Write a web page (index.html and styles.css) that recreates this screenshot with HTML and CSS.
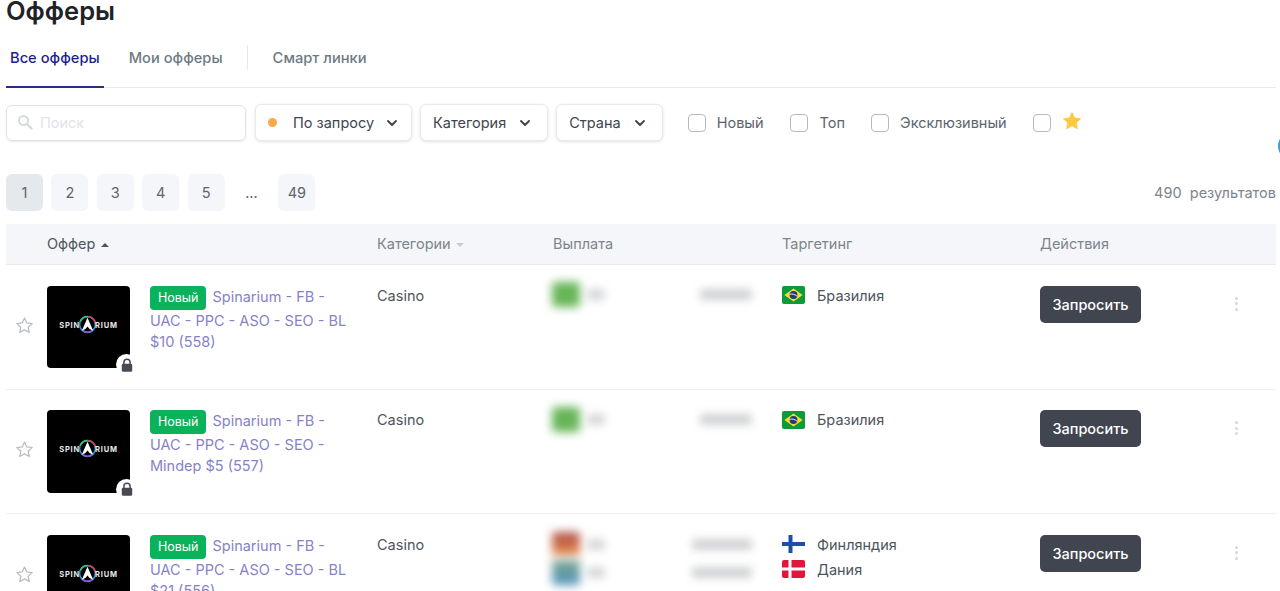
FILE: index.html
```html
<!DOCTYPE html>
<html lang="ru">
<head>
<meta charset="utf-8">
<title>Офферы</title>
<link rel="stylesheet" href="styles.css">
</head>
<body>
<svg class="defs" width="0" height="0" aria-hidden="true">
  <defs>
    <symbol id="chev" viewBox="0 0 12 12"><path d="M2 4l4 4 4-4" fill="none" stroke="currentColor" stroke-width="1.9" stroke-linecap="round" stroke-linejoin="round"/></symbol>
    <symbol id="star" viewBox="0 0 24 24"><path d="M12 2.6l2.9 6.2 6.8.8-5 4.6 1.3 6.7-6-3.4-6 3.4 1.3-6.7-5-4.6 6.8-.8z" fill="none" stroke="currentColor" stroke-width="1.6" stroke-linejoin="round"/></symbol>
    <symbol id="lock" viewBox="0 0 14 14"><path d="M3.9 6V4.3a3.1 3.1 0 0 1 6.2 0V6" fill="none" stroke="currentColor" stroke-width="1.5"/><rect x="1.8" y="5.8" width="10.4" height="8" rx="1.4" fill="currentColor"/></symbol>
    <symbol id="logoa" viewBox="0 0 24 24">
      <circle cx="12" cy="12" r="10" fill="none" stroke="#2f8fd8" stroke-width="2"/>
      <path d="M3 8A10 10 0 0 1 12 2" fill="none" stroke="#3fbf6b" stroke-width="2"/>
      <path d="M13 2A10 10 0 0 1 22 11" fill="none" stroke="#d8434b" stroke-width="2"/>
      <path d="M5 19A10 10 0 0 0 19 19" fill="none" stroke="#a04fd0" stroke-width="2"/>
      <path d="M12 3.500L4.800 20l4.600-2.400L12 14.500l2.600 3.100 4.600 2.400z" fill="#fff"/>
    </symbol>
    <symbol id="br" viewBox="0 0 23 18"><rect width="23" height="18" rx="2" fill="#0c9b3a"/><path d="M11.5 2.4L20.6 9l-9.1 6.6L2.4 9z" fill="#fbdc2b"/><circle cx="11.5" cy="9" r="3.9" fill="#1c3a86"/><path d="M7.8 8.2c2.6-.5 5.3.2 7.3 2" fill="none" stroke="#fff" stroke-width=".9"/></symbol>
    <symbol id="fi" viewBox="0 0 23 18"><rect width="23" height="18" rx="2" fill="#fff"/><path d="M0 7h6.500V0h4v7H23v4H10.500v7h-4v-7H0z" fill="#1d4fa8"/></symbol>
    <symbol id="dk" viewBox="0 0 23 18"><rect width="23" height="18" rx="2" fill="#e0163d"/><path d="M0 7.500h6.500V0h3v7.500H23v3H9.500V18h-3v-7.500H0z" fill="#fff"/></symbol>
  </defs>
</svg>
<main class="page">
  <h1 class="title">Офферы</h1>

  <nav class="tabs">
    <a class="tab tab-active">Все офферы</a>
    <a class="tab tab-second">Мои офферы</a>
    <span class="tab-sep"></span>
    <a class="tab tab-third">Смарт линки</a>
  </nav>

  <div class="filters">
    <label class="search">
      <svg class="search-icon" viewBox="0 0 16 16" width="16" height="16"><circle cx="6.500" cy="6.500" r="4.500" fill="none" stroke="currentColor" stroke-width="2"/><path d="M10 10l4.500 4.500" stroke="currentColor" stroke-width="2.400" stroke-linecap="round"/></svg>
      <span class="search-ph">Поиск</span>
    </label>
    <button class="select select-status"><span class="dot"></span><span>По запросу</span><svg class="chev"><use href="#chev"/></svg></button>
    <button class="select"><span>Категория</span><svg class="chev"><use href="#chev"/></svg></button>
    <button class="select"><span>Страна</span><svg class="chev"><use href="#chev"/></svg></button>
    <div class="checks">
      <label class="check check-new"><span class="box"></span>Новый</label>
      <label class="check check-top"><span class="box"></span>Топ</label>
      <label class="check check-excl"><span class="box"></span>Эксклюзивный</label>
      <label class="check"><span class="box"></span><svg class="fav" viewBox="0 0 24 24"><path d="M12 1.800l3.100 6.600 7.200.9-5.300 4.900 1.400 7.100-6.400-3.600-6.400 3.600 1.400-7.100-5.300-4.900 7.200-.9z" fill="#fbc83f" stroke="#fbc83f" stroke-linejoin="round"/></svg></label>
    </div>
  </div>
  <span class="edge-dot"></span>

  <div class="pager-row">
    <div class="pager">
      <a class="pg pg-on">1</a><a class="pg">2</a><a class="pg">3</a><a class="pg">4</a><a class="pg">5</a>
      <span class="pg pg-gap">...</span><a class="pg">49</a>
    </div>
    <div class="count">490&nbsp; результатов</div>
  </div>

  <div class="table">
    <div class="row row-head">
      <div class="c-star"></div>
      <div class="c-offer">Оффер <i class="caret caret-up"></i></div>
      <div class="c-cat">Категории <i class="caret caret-down"></i></div>
      <div class="c-pay">Выплата</div>
      <div class="c-geo">Таргетинг</div>
      <div class="c-act">Действия</div>
    </div>

    <div class="row">
      <div class="c-star"><svg class="star"><use href="#star"/></svg></div>
      <div class="c-offer offer">
        <div class="thumb"><span class="logo">SPIN<svg class="logo-a"><use href="#logoa"/></svg>RIUM</span><span class="lock"><svg><use href="#lock"/></svg></span></div>
        <div class="offer-name"><span class="badge">Новый</span>Spinarium - FB - UAC - PPC - ASO - SEO - BL $10 (558)</div>
      </div>
      <div class="c-cat cell-text">Casino</div>
      <div class="c-pay"><div class="pay"><i class="blob blob-green"></i><i class="smudge s-a"></i><i class="smudge s-b"></i></div></div>
      <div class="c-geo"><div class="geo"><svg class="flag"><use href="#br"/></svg>Бразилия</div></div>
      <div class="c-act"><button class="cta">Запросить</button></div>
      <div class="c-more"><i></i><i></i><i></i></div>
    </div>

    <div class="row">
      <div class="c-star"><svg class="star"><use href="#star"/></svg></div>
      <div class="c-offer offer">
        <div class="thumb"><span class="logo">SPIN<svg class="logo-a"><use href="#logoa"/></svg>RIUM</span><span class="lock"><svg><use href="#lock"/></svg></span></div>
        <div class="offer-name"><span class="badge">Новый</span>Spinarium - FB - UAC - PPC - ASO - SEO - Mindep $5 (557)</div>
      </div>
      <div class="c-cat cell-text">Casino</div>
      <div class="c-pay"><div class="pay"><i class="blob blob-green"></i><i class="smudge s-a"></i><i class="smudge s-b"></i></div></div>
      <div class="c-geo"><div class="geo"><svg class="flag"><use href="#br"/></svg>Бразилия</div></div>
      <div class="c-act"><button class="cta">Запросить</button></div>
      <div class="c-more"><i></i><i></i><i></i></div>
    </div>

    <div class="row">
      <div class="c-star"><svg class="star"><use href="#star"/></svg></div>
      <div class="c-offer offer">
        <div class="thumb"><span class="logo">SPIN<svg class="logo-a"><use href="#logoa"/></svg>RIUM</span></div>
        <div class="offer-name"><span class="badge">Новый</span>Spinarium - FB - UAC - PPC - ASO - SEO - BL $21 (556)</div>
      </div>
      <div class="c-cat cell-text">Casino</div>
      <div class="c-pay">
        <div class="pay pay-multi"><i class="blob blob-de"></i><i class="smudge s-a"></i><i class="smudge s-c"></i></div>
        <div class="pay pay-multi"><i class="blob blob-fi"></i><i class="smudge s-a"></i><i class="smudge s-c"></i></div>
      </div>
      <div class="c-geo">
        <div class="geo geo-multi"><svg class="flag"><use href="#fi"/></svg>Финляндия</div>
        <div class="geo geo-multi"><svg class="flag"><use href="#dk"/></svg>Дания</div>
      </div>
      <div class="c-act"><button class="cta">Запросить</button></div>
      <div class="c-more"><i></i><i></i><i></i></div>
    </div>
  </div>
</main>
</body>
</html>
```

FILE: styles.css
```css
* { box-sizing: border-box; }
html, body { margin: 0; height: 591px; overflow: hidden; background: #fff; }
body { font-family: Inter, "Noto Sans", sans-serif; font-size: 14.500px; color: #3f4550; }
.defs { position: absolute; }
.page { position: relative; padding: 0 4px 0 6px; }

.title { margin: 0; font-size: 25.500px; font-weight: 600; line-height: 22px; height: 22px; color: #1f2227; }

.tabs { display: flex; height: 66px; border-bottom: 1px solid #e9ebef; font-size: 14.700px; font-weight: 500; color: #6e7a83; }
.tab { display: flex; align-items: center; padding: 6px 4px 0; }
.tab-active { color: #1c1f8e; border-bottom: 2px solid #2a2f86; margin-bottom: -1px; padding-top: 8px; }
.tab-second { margin-left: 21px; }
.tab-sep { align-self: center; width: 1px; height: 25px; margin: 6px 21px 0 20px; background: #e6e8ec; }

.filters { display: flex; align-items: center; height: 37px; margin-top: 16px; }
.search { display: flex; align-items: center; gap: 7px; width: 240px; height: 36px; margin-top: 1px; padding: 0 10px 2px; border: 1px solid #dfe2e7; border-radius: 6px; box-shadow: 0 1px 2px rgba(30, 40, 60, .1); }
.search-icon { color: #d6dae0; flex: none; }
.search-ph { color: #e0e3e8; }
.select { display: flex; align-items: center; height: 37px; margin-left: 8px; padding: 0 16px 0 12px; background: #fff; border: 1px solid #e8eaee; border-radius: 6px; box-shadow: 0 1px 3px rgba(30, 40, 60, .14); font: inherit; color: #3f4550; }
.select-status { margin-left: 9px; padding: 0 13px 0 12px; }
.dot { width: 9px; height: 9px; margin-right: 16px; border-radius: 50%; background: #f8a94b; }
.chev { width: 12px; height: 12px; margin-left: 13px; color: #3f4550; }
.select-status .chev { margin-left: 12px; }
.checks { display: flex; align-items: center; margin-left: 25px; color: #5b646d; }
.check { display: flex; align-items: center; gap: 11px; }
.check-new { margin-right: 26px; }
.check-top { gap: 12px; margin-right: 26px; }
.check-excl { margin-right: 26px; }
.box { width: 18px; height: 18px; border: 1.500px solid #b5bbc3; border-radius: 4px; }
.fav { width: 20px; height: 20px; margin-top: -3px; }
.edge-dot { position: absolute; left: 1278px; top: 137px; width: 10px; height: 18px; border-radius: 50%; background: #3d9bdc; }

.pager-row { display: flex; align-items: center; justify-content: space-between; height: 37px; margin-top: 33px; }
.pager { display: flex; gap: 8.400px; }
.pg { display: flex; align-items: center; justify-content: center; width: 37px; height: 37px; border-radius: 6px; background: #f4f6f9; color: #5c646d; }
.pg-on { background: #e5e9ee; }
.pg-gap { background: none; }
.count { color: #7c858c; }

.table { margin-top: 13px; }
.row { display: grid; grid-template-columns: 41px 330px 176px 229px 258px 196px 40px; height: 124.500px; border-bottom: 1px solid #eef0f3; }
.row-head { height: 41px; padding-bottom: 2px; align-items: center; background: #f4f6fa; color: #7c858c; border-bottom: 1px solid #e9ebef; }
.row-head > div { padding-top: 0; }
.c-star { display: flex; align-items: center; padding-left: 9px; }
.row-head .c-offer { color: #4d555d; }
.caret { display: inline-block; width: 0; height: 0; margin-left: 1px; vertical-align: 2px; border: 4px solid transparent; }
.caret-up { border-top: 0; border-bottom: 4px solid #4d555d; }
.caret-down { border-bottom: 0; border-top: 4px solid #c9cdd3; }
.star { width: 19px; height: 19px; color: #b9bdc3; margin-top: -3px; }

.offer { display: flex; gap: 20px; padding-top: 20.900px; }
.thumb { position: relative; flex: none; display: flex; align-items: center; justify-content: center; width: 83px; height: 82.500px; padding-bottom: 4px; border-radius: 4px; background: #000; }
.logo { display: flex; align-items: center; font-size: 7.500px; font-weight: 700; letter-spacing: .8px; color: #e9e9e9; }
.logo-a { width: 19px; height: 19px; margin: -2px -2px 0; }
.lock { position: absolute; right: -7px; bottom: -7px; display: flex; align-items: center; justify-content: center; width: 21px; height: 21px; border-radius: 50% 50% 0 50%; background: #fff; }
.lock svg { width: 14px; height: 14px; color: #454a53; }
.offer-name { width: 200px; line-height: 21px; color: #8583c6; }
.badge { display: inline-block; height: 24px; margin-right: 6px; padding: 0 8px; border-radius: 4px; background: #0ab25b; color: #fff; font-size: 12.500px; line-height: 24px; }

.cell-text { padding-top: 20.900px; line-height: 19px; color: #4d555d; }
.c-pay { padding-top: 16.900px; }
.pay { display: flex; align-items: center; width: 200px; height: 26px; margin-left: -1px; }
.pay-multi { height: 28px; }
.blob { width: 28px; height: 25px; border-radius: 4px; filter: blur(5px); }
.blob-green { background: #66b556; }
.blob-de { background: linear-gradient(#a9524a, #d46f45 60%, #f0b77c); }
.blob-fi { background: linear-gradient(#7ea68f, #4f93bd); }
.smudge { height: 11px; border-radius: 3px; background: #c9cccf; filter: blur(4px); }
.s-a { width: 18px; margin-left: 7px; opacity: .8; }
.s-b { width: 52px; margin-left: auto; opacity: .9; }
.s-c { width: 60px; margin-left: auto; opacity: .9; }

.c-geo { padding-top: 20.900px; }
.geo { display: flex; align-items: center; gap: 12px; height: 19px; color: #4d555d; }
.geo-multi { height: 25px; margin-top: -3px; margin-bottom: 3px; }
.flag { width: 23px; height: 18px; flex: none; }

.c-act { padding-top: 20.900px; }
.cta { width: 101px; height: 37px; padding: 0; border: 0; border-radius: 5px; background: #40454f; color: #fff; font: 500 14.500px Inter, sans-serif; }
.c-more { display: flex; flex-direction: column; gap: 2.500px; padding-top: 31.900px; margin-left: -1px; }
.c-more i { width: 3px; height: 3px; border-radius: 50%; background: #d6d8dc; }
```
